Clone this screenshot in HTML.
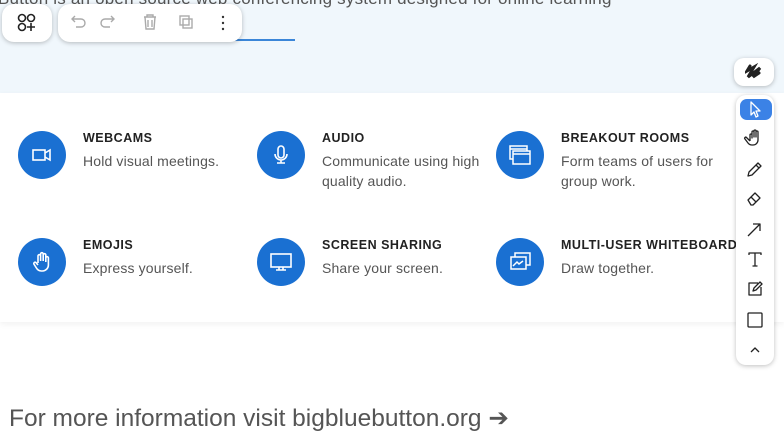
<!DOCTYPE html>
<html><head><style>
body{margin:0;width:784px;height:442px;overflow:hidden;background:#fff;font-family:"Liberation Sans",sans-serif;position:relative}
.top{position:absolute;left:0;top:0;width:784px;height:93px;background:#f0f7fc;overflow:hidden}
.toptext{position:absolute;left:-62px;top:-11px;font-size:17px;color:#555;white-space:nowrap;letter-spacing:0.2px}
.uline{position:absolute;left:225px;top:39px;width:70px;height:2px;background:#3b86d8}
.panel{position:absolute;left:0;top:93px;width:784px;height:229px;background:#fff;box-shadow:0 2px 6px rgba(0,0,0,0.06)}
.circ{position:absolute;width:48px;height:48px;border-radius:50%;background:#1a70d2;display:flex;align-items:center;justify-content:center}
.t{position:absolute;font-size:12.5px;font-weight:bold;letter-spacing:0.5px;color:#222;white-space:nowrap}
.d{position:absolute;font-size:14px;color:#555;line-height:20px;letter-spacing:0.15px;width:170px}
.box{position:absolute;background:#fff;border-radius:12px;box-shadow:0 1px 5px rgba(0,0,0,0.25)}
.more{position:absolute;left:9px;top:403px;font-size:24.5px;color:#555;white-space:nowrap}
svg{display:block}
</style></head><body>
<div class="top"><div class="toptext">BigBlueButton is an open source web conferencing system designed for online learning</div></div>
<div class="uline"></div>
<div class="panel"></div>

<div class="circ" style="left:18px;top:131px"><svg width="24" height="24" viewBox="0 0 24 24" fill="none" stroke="#fff" stroke-width="1.6"><rect x="3" y="7" width="12" height="10"/><path d="M15 10l5-3v10l-5-3"/></svg></div>
<div class="t" style="left:83px;top:131px">WEBCAMS</div>
<div class="d" style="left:83px;top:151px">Hold visual meetings.</div>

<div class="circ" style="left:257px;top:131px"><svg width="24" height="24" viewBox="0 0 24 24" fill="none" stroke="#fff" stroke-width="1.6"><rect x="9" y="3" width="6" height="12" rx="3"/><path d="M6 11a6 6 0 0 0 12 0M12 17v3M8 20h8"/></svg></div>
<div class="t" style="left:322px;top:131px">AUDIO</div>
<div class="d" style="left:322px;top:151px">Communicate using high quality audio.</div>

<div class="circ" style="left:496px;top:131px"><svg width="26" height="26" viewBox="0 0 26 26" fill="none" stroke="#fff" stroke-width="1.5"><rect x="3" y="4" width="17" height="13"/><path d="M3 7h17"/><rect x="6" y="9" width="17" height="13" fill="#1a70d2"/><path d="M6 12h17"/></svg></div>
<div class="t" style="left:561px;top:131px">BREAKOUT ROOMS</div>
<div class="d" style="left:561px;top:151px">Form teams of users for group work.</div>

<div class="circ" style="left:18px;top:238px"><svg width="24" height="24" viewBox="0 0 24 24" fill="none" stroke="#fff" stroke-width="1.6"><path d="M8 13V6a1.3 1.3 0 0 1 2.6 0v5V4a1.3 1.3 0 0 1 2.6 0v7V5a1.3 1.3 0 0 1 2.6 0v7V8a1.3 1.3 0 0 1 2.6 0v7a6 6 0 0 1-6 6h-1a6 6 0 0 1-5-3l-2.5-4a1.3 1.3 0 0 1 2-1.5L8 15"/></svg></div>
<div class="t" style="left:83px;top:238px">EMOJIS</div>
<div class="d" style="left:83px;top:258px">Express yourself.</div>

<div class="circ" style="left:257px;top:238px"><svg width="26" height="26" viewBox="0 0 26 26" fill="none" stroke="#fff" stroke-width="1.6"><rect x="3" y="5" width="20" height="13"/><path d="M11 18v3M15 18v3M8 21h10"/></svg></div>
<div class="t" style="left:322px;top:238px">SCREEN SHARING</div>
<div class="d" style="left:322px;top:258px">Share your screen.</div>

<div class="circ" style="left:496px;top:238px"><svg width="26" height="26" viewBox="0 0 26 26" fill="none" stroke="#fff" stroke-width="1.5"><rect x="8" y="4" width="15" height="12"/><rect x="4" y="8" width="15" height="12" fill="#1a70d2"/><path d="M6 17l4-4 2 2 4-3"/></svg></div>
<div class="t" style="left:561px;top:238px">MULTI-USER WHITEBOARD</div>
<div class="d" style="left:561px;top:258px">Draw together.</div>

<div class="more">For more information visit bigbluebutton.org ➔</div>

<div class="box" style="left:2px;top:4px;width:50px;height:38px"><svg style="margin:8px 0 0 14px" width="22" height="22" viewBox="0 0 22 22" fill="none" stroke="#222" stroke-width="1.6"><circle cx="6" cy="6" r="3.5"/><circle cx="15" cy="6" r="3.5"/><circle cx="6" cy="15" r="3.5"/><path d="M15 11v8M11 15h8"/></svg></div>
<div class="box" style="left:58px;top:4px;width:184px;height:38px">
<svg width="184" height="38" viewBox="0 0 184 38" fill="none" stroke="#aaa" stroke-width="1.4">
<path d="M17 12l-3 3 3 3M14 15h9a4 4 0 0 1 0 8h-5"/>
<path d="M53 12l3 3-3 3M56 15h-9a4 4 0 0 0 0 8h5"/>
<path d="M86 13h12M89 13v-2h6v2M87 13l1 12h8l1-12M90 16v7M94 16v7"/>
<rect x="122" y="12" width="9" height="9"/><rect x="125" y="15" width="9" height="9"/>
<circle cx="165" cy="13" r="1.2" fill="#333" stroke="none"/><circle cx="165" cy="19" r="1.2" fill="#333" stroke="none"/><circle cx="165" cy="25" r="1.2" fill="#333" stroke="none"/>
</svg></div>

<div class="box" style="left:734px;top:58px;width:40px;height:28px;border-radius:10px"><svg style="margin:5px 0 0 11px" width="18" height="18" viewBox="0 0 18 18" fill="none" stroke="#222" stroke-width="3" stroke-linecap="round"><path d="M5 3L2 8l7-4-6 10 12-9-7 9 6-4"/></svg></div>

<div class="box" style="left:736px;top:95px;width:38px;height:270px;border-radius:10px">
<div style="position:absolute;left:4px;top:4px;width:32px;height:21px;background:#3b82e6;border-radius:7px"></div>
<svg style="position:absolute;left:0;top:0" width="38" height="270" viewBox="0 0 38 270" fill="none" stroke="#222" stroke-width="1.3" stroke-linejoin="round">
<path d="M15 7l0 13 3-3 2 5 2-1-2-5 4 0z" stroke="#fff" fill="#3b82e6"/>
<path d="M14 46v-6a1 1 0 0 1 2 0v3-6a1 1 0 0 1 2 0v5-6a1 1 0 0 1 2 0v6-5a1 1 0 0 1 2 0v8a5 5 0 0 1-5 5h-1a5 5 0 0 1-4-2l-3-4a1 1 0 0 1 1.5-1.5L14 46"/>
<path d="M12 81l1-4 9-9 3 3-9 9z M20 70l3 3"/>
<path d="M12 105l7-7 5 5-7 7h-2z M15 102l5 5"/>
<path d="M12 141l12-12M17 129h7v7"/>
<path d="M13 160v-2h12v2M19 158v13M16.5 171h5"/>
<path d="M22 188h-9v12h12v-8M17 196l1-3 6-6 2 2-6 6z"/>
<rect x="12" y="218" width="14" height="14" rx="1"/>
<path d="M15 257l4-4 4 4"/>
</svg></div>
</body></html>
